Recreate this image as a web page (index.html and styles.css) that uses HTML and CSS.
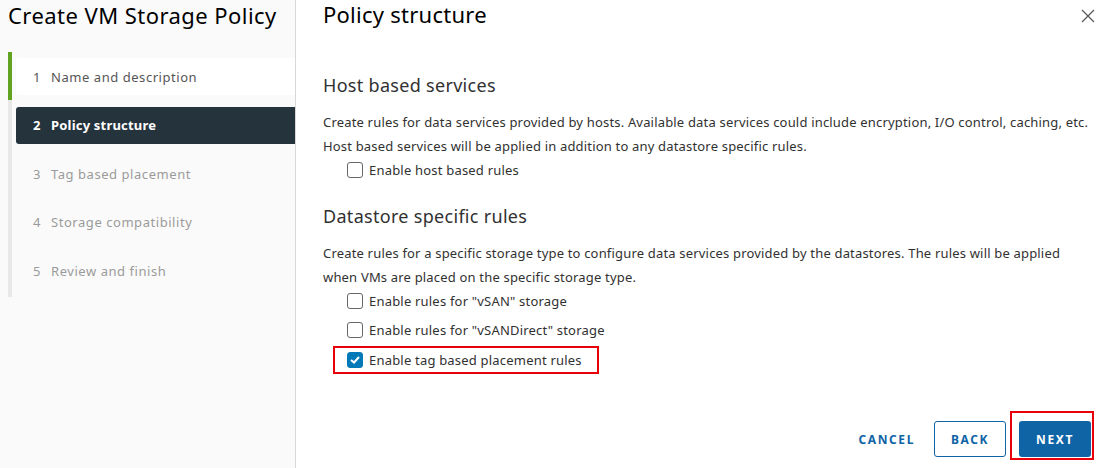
FILE: index.html
```html
<!DOCTYPE html>
<html>
<head>
<meta charset="utf-8">
<link rel="stylesheet" href="styles.css">
</head>
<body>
<div class="dialog">
  <aside class="sidebar">
    <h1 class="title">Create VM Storage Policy</h1>
    <ol class="steps">
      <li class="step done"><span class="num">1</span>Name and description</li>
      <li class="step active"><span class="num">2</span>Policy structure</li>
      <li class="step disabled"><span class="num">3</span>Tag based placement</li>
      <li class="step disabled"><span class="num">4</span>Storage compatibility</li>
      <li class="step disabled"><span class="num">5</span>Review and finish</li>
    </ol>
  </aside>
  <main class="content">
    <header class="head">
      <h2 class="heading">Policy structure</h2>
      <svg class="close" width="14" height="14" viewBox="0 0 14 14"><path d="M1 1 L13 13 M13 1 L1 13" stroke="#555" stroke-width="1.2" fill="none"/></svg>
    </header>
    <h3 class="section first">Host based services</h3>
    <p class="desc">Create rules for data services provided by hosts. Available data services could include encryption, I/O control, caching, etc.<br>Host based services will be applied in addition to any datastore specific rules.</p>
    <label class="row"><span class="cb"></span>Enable host based rules</label>
    <h3 class="section second">Datastore specific rules</h3>
    <p class="desc">Create rules for a specific storage type to configure data services provided by the datastores. The rules will be applied<br>when VMs are placed on the specific storage type.</p>
    <div class="rows">
      <label class="row"><span class="cb"></span>Enable rules for "vSAN" storage</label>
      <label class="row"><span class="cb"></span>Enable rules for "vSANDirect" storage</label>
      <div class="mark-row"><label class="row"><span class="cb checked"><svg width="10" height="8" viewBox="0 0 10 8"><path d="M1 4 L4 6.5 L9 1" stroke="#fff" stroke-width="2" fill="none"/></svg></span>Enable tag based placement rules</label></div>
    </div>
    <footer class="foot">
      <button class="btn flat">CANCEL</button>
      <button class="btn outline">BACK</button>
      <div class="mark-btn"><button class="btn solid">NEXT</button></div>
    </footer>
  </main>
</div>
</body>
</html>
```
FILE: styles.css
```css
* { box-sizing: border-box; }
html, body { margin: 0; padding: 0; }
body {
  width: 1096px;
  height: 468px;
  overflow: hidden;
  font-family: "Noto Sans", "Open Sans", sans-serif;
  color: #313131;
  background: #fff;
}
.dialog { display: flex; height: 468px; }
.sidebar {
  width: 296px;
  flex: none;
  background: #fafafa;
  border-right: 1px solid #d8d8d8;
}
.title {
  margin: 0;
  padding-left: 8px;
  font-size: 22px;
  line-height: 30px;
  font-weight: 400;
  letter-spacing: 0.45px;
  color: #000;
}
.steps {
  list-style: none;
  margin: 22px 0 0 8px;
  padding: 6px 0 8px 8px;
  background: linear-gradient(#62a420 0 48px, #e8e8e8 48px) left top / 4px 100% no-repeat;
  display: flex;
  flex-direction: column;
  gap: 11.5px;
}
.step {
  height: 37px;
  display: flex;
  align-items: center;
  padding-left: 17px;
  font-size: 13px;
  letter-spacing: 0.55px;
  border-radius: 3px 0 0 3px;
}
.num { width: 18px; letter-spacing: 0; }
.step.done { background: #fff; color: #565656; }
.step.active { background: #25333d; color: #fff; font-weight: 700; letter-spacing: 0.2px; }
.step.disabled { color: #9a9a9a; }
.content {
  flex: 1;
  display: flex;
  flex-direction: column;
  padding: 0 0 8px 27px;
}
.head { display: flex; justify-content: space-between; align-items: flex-start; }
.heading {
  margin: 0;
  font-size: 22px;
  line-height: 28px;
  font-weight: 400;
  letter-spacing: 0.25px;
  color: #000;
}
.close { margin: 9px 1px 0 0; }
.section {
  margin: 0;
  font-size: 18px;
  line-height: 24px;
  font-weight: 400;
  letter-spacing: 0.3px;
  color: #313131;
}
.section.first { margin-top: 45px; }
.section.second { margin-top: 22px; }
.desc {
  margin: 13px 0 0;
  font-size: 13px;
  line-height: 24px;
  letter-spacing: 0.18px;
  white-space: nowrap;
}
.rows { display: flex; flex-direction: column; }
.rows > .row:nth-child(2) { margin-top: 5px; }
.row {
  display: flex;
  align-items: center;
  height: 24px;
  padding-left: 24px;
  font-size: 13px;
  letter-spacing: 0.2px;
  color: #313131;
}
.cb {
  width: 16px;
  height: 16px;
  border: 1px solid #666;
  border-radius: 3px;
  margin-right: 6px;
  display: flex;
  align-items: center;
  justify-content: center;
  background: #fff;
  flex: none;
}
.cb.checked { background: #0079b8; border-color: #0079b8; }
.mark-row {
  margin: 4px 0 0 10px;
  width: 266px;
  height: 28px;
  border: 2px solid #e8000b;
  display: flex;
  align-items: center;
}
.mark-row .row { padding-left: 12px; }
.foot {
  margin-top: auto;
  display: flex;
  justify-content: flex-end;
  align-items: flex-end;
  padding-right: 2px;
}
.btn {
  height: 36px;
  padding: 0 12px;
  font-family: inherit;
  font-size: 12px;
  font-weight: 700;
  letter-spacing: 1.6px;
  border-radius: 3px;
  border: 1px solid transparent;
  background: none;
  color: #0f64a6;
  margin-bottom: 3px;
}
.btn.flat { margin-right: 6px; }
.btn.outline { border-color: #0f64a6; width: 72px; margin-right: 4px; }
.btn.solid { background: #0f64a6; color: #fff; width: 72px; margin: 0; }
.mark-btn {
  border: 2px solid #e8000b;
  padding: 8px 1px 1px 7px;
}
```
